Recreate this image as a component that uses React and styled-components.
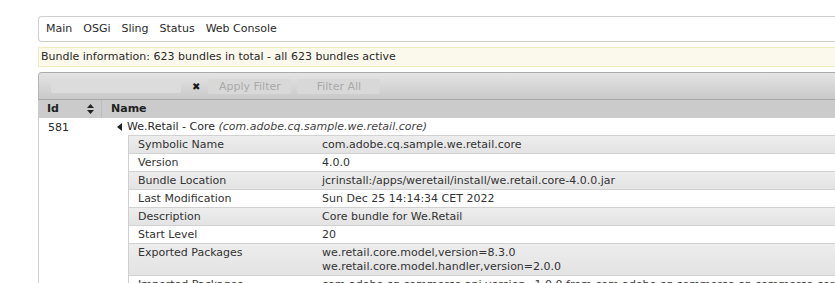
import styled, { createGlobalStyle } from "styled-components";

const Global = createGlobalStyle`
  html, body {
    margin: 0;
    background: #fff;
  }
  body {
    font-family: "DejaVu Sans", Verdana, sans-serif;
    font-size: 11px;
    color: #2a2a2a;
    overflow: hidden;
  }
`;

const Page = styled.div`
  padding: 16px 0 0 38px;
  width: 860px;
`;

const Nav = styled.div`
  display: flex;
  align-items: center;
  height: 24px;
  padding-left: 7px;
  border: 1px solid #cfcfcf;
  border-right: none;
  border-radius: 4px 0 0 4px;
`;

const NavItem = styled.span`
  margin-right: 11px;
  line-height: 24px;
`;

const Info = styled.div`
  margin-top: 5px;
  height: 18px;
  line-height: 18px;
  padding-left: 2px;
  background: #fbf9ec;
  border: 1px solid #f1ebc0;
  border-right: none;
`;

const Toolbar = styled.div`
  margin-top: 5px;
  height: 26px;
  display: flex;
  align-items: center;
  padding-left: 12px;
  border-top: 1px solid #ababab;
  border-left: 1px solid #b5b5b5;
  border-radius: 4px 0 0 0;
  background: linear-gradient(to bottom, #e4e4e4, #c9c9c9);
`;

const FilterInput = styled.div`
  width: 130px;
  height: 13px;
  background: #dcdcdc;
  border-radius: 2px;
`;

const Clear = styled.span`
  margin: 0 8px 0 11px;
  font-size: 10px;
  color: #1a1a1a;
`;

const Button = styled.span`
  width: ${(p) => p.w}px;
  height: 15px;
  line-height: 15px;
  margin-right: 6px;
  text-align: center;
  color: #a9a9a9;
  background: #d8d8d8;
  border-radius: 2px;
`;

const HeadRow = styled.div`
  display: flex;
  height: 18px;
  line-height: 18px;
  border-top: 1px solid #a7a7a7;
  background: #cbcbcb;
  font-weight: bold;
  color: #222;
`;

const IdHead = styled.div`
  width: 64px;
  padding: 0 7px 0 9px;
  box-sizing: border-box;
  display: flex;
  align-items: center;
  justify-content: space-between;
  border-right: 1px solid #bcbcbc;
`;

const NameHead = styled.div`
  padding-left: 9px;
`;

const Body = styled.div`
  display: flex;
  border-left: 1px solid #cfcfcf;
`;

const IdCell = styled.div`
  width: 64px;
  padding: 2px 0 0 9px;
  box-sizing: border-box;
  line-height: 15px;
`;

const NameCell = styled.div`
  flex: 1;
  padding-left: 25px;
`;

const Title = styled.div`
  display: flex;
  align-items: center;
  height: 17px;
  line-height: 17px;
  margin-left: -11px;
  gap: 5px;
`;

const Sym = styled.i`
  color: #444;
`;

const Details = styled.div`
  border-left: 1px solid #cfcfcf;
`;

const DRow = styled.div`
  display: flex;
  border-top: 1px solid #d2d2d2;
  line-height: 14px;
  padding: 2px 0 1px;
  background: ${(p) =>
    p.shade ? "linear-gradient(to bottom, #ededed, #e3e3e3)" : "#fff"};
`;

const Key = styled.div`
  width: 193px;
  padding-left: 9px;
  box-sizing: border-box;
  flex-shrink: 0;
  color: #333;
`;

const Val = styled.div`
  color: #333;
  white-space: nowrap;
`;

const SortIcon = () => (
  <svg width="7" height="10" viewBox="0 0 7 10">
    <path d="M3.5 0 L7 4 L0 4 Z M3.5 10 L7 6 L0 6 Z" fill="#222" />
  </svg>
);

const Arrow = () => (
  <svg width="5" height="8" viewBox="0 0 5 8">
    <path d="M0 4 L5 0 L5 8 Z" fill="#222" />
  </svg>
);

const details = [
  ["Symbolic Name", ["com.adobe.cq.sample.we.retail.core"]],
  ["Version", ["4.0.0"]],
  ["Bundle Location", ["jcrinstall:/apps/weretail/install/we.retail.core-4.0.0.jar"]],
  ["Last Modification", ["Sun Dec 25 14:14:34 CET 2022"]],
  ["Description", ["Core bundle for We.Retail"]],
  ["Start Level", ["20"]],
  [
    "Exported Packages",
    [
      "we.retail.core.model,version=8.3.0",
      "we.retail.core.model.handler,version=2.0.0",
    ],
  ],
  [
    "Imported Packages",
    ["com.adobe.cq.commerce.api,version=1.0.0 from com.adobe.cq.commerce.cq-commerce-core (4"],
  ],
];

export default function App() {
  return (
    <>
      <Global />
      <Page>
        <Nav>
          {["Main", "OSGi", "Sling", "Status", "Web Console"].map((n) => (
            <NavItem key={n}>{n}</NavItem>
          ))}
        </Nav>
        <Info>Bundle information: 623 bundles in total - all 623 bundles active</Info>
        <Toolbar>
          <FilterInput />
          <Clear>✖</Clear>
          <Button w={83}>Apply Filter</Button>
          <Button w={83}>Filter All</Button>
        </Toolbar>
        <HeadRow>
          <IdHead>
            Id <SortIcon />
          </IdHead>
          <NameHead>Name</NameHead>
        </HeadRow>
        <Body>
          <IdCell>581</IdCell>
          <NameCell>
            <Title>
              <Arrow />
              <span>
                We.Retail - Core <Sym>(com.adobe.cq.sample.we.retail.core)</Sym>
              </span>
            </Title>
            <Details>
              {details.map(([k, v], i) => (
                <DRow key={k} shade={i % 2 === 0}>
                  <Key>{k}</Key>
                  <Val>
                    {v.map((line) => (
                      <div key={line}>{line}</div>
                    ))}
                  </Val>
                </DRow>
              ))}
            </Details>
          </NameCell>
        </Body>
      </Page>
    </>
  );
}
